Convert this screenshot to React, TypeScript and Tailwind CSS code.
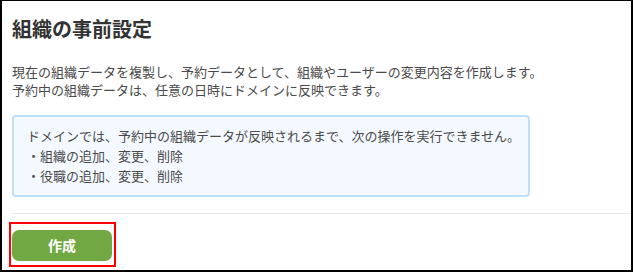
import React from "react";

export default function App() {
  const font = { fontFamily: '"Noto Sans CJK JP", "Noto Sans", sans-serif' };
  return (
    <div
      className="box-border w-[633px] h-[272px] bg-white border-black border-t border-l-2 border-r-2 border-b-2 pl-[10px] pt-[13px]"
      style={font}
    >
      <h1 className="text-[20px] leading-[30px] font-bold text-[#333333]">組織の事前設定</h1>
      <div className="mt-[19px] text-[13px] leading-[18px] text-[#4a4a4a]">
        <p>現在の組織データを複製し、予約データとして、組織やユーザーの変更内容を作成します。</p>
        <p>予約中の組織データは、任意の日時にドメインに反映できます。</p>
      </div>
      <div className="mt-[16px] box-border w-[518px] border-2 border-[#bfdef8] bg-[#f4f9ff] rounded-[4px] pl-[13px] py-[9px] text-[13px] leading-[20px] text-[#4a4a4a]">
        <p>ドメインでは、予約中の組織データが反映されるまで、次の操作を実行できません。</p>
        <p>・組織の追加、変更、削除</p>
        <p>・役職の追加、変更、削除</p>
      </div>
      <div className="mt-[16px] h-px bg-[#e8e8e8]" />
      <div className="relative mt-[16px] w-[100px]">
        <button className="w-[100px] h-[31px] rounded-[7px] bg-[#72a843] text-white text-[14px] font-bold flex items-center justify-center">
          作成
        </button>
        <div className="absolute left-[-3px] top-[-8px] w-[107px] h-[45px] border-2 border-[#ff0000] pointer-events-none" />
      </div>
    </div>
  );
}
